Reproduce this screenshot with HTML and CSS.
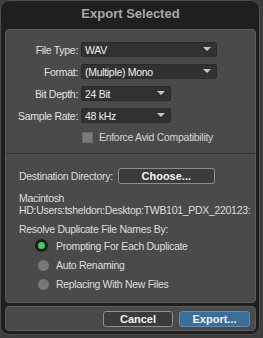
FILE: index.html
```html
<!DOCTYPE html>
<html lang="en">
<head>
  <meta charset="UTF-8">
  <title>Export Selected</title>
  <link rel="stylesheet" href="styles.css">
</head>
<body>

<div class="window">
  <div class="title">Export Selected</div>

  <div class="panel">
    <section class="format-section">
      <div class="field-grid">
        <label>File Type:</label>
        <div class="select wide">WAV</div>
        <label>Format:</label>
        <div class="select wide">(Multiple) Mono</div>
        <label>Bit Depth:</label>
        <div class="select narrow">24 Bit</div>
        <label>Sample Rate:</label>
        <div class="select narrow">48 kHz</div>
      </div>
      <div class="check-row">
        <span class="checkbox"></span>
        <span>Enforce Avid Compatibility</span>
      </div>
    </section>

    <section class="dest-section">
      <div class="dest-row">
        <span>Destination Directory:</span>
        <button class="btn choose">Choose...</button>
      </div>
      <div class="path">Macintosh<br>HD:Users:tsheldon:Desktop:TWB101_PDX_220123:</div>

      <div class="resolve-title">Resolve Duplicate File Names By:</div>
      <div class="radio-list">
        <div class="radio-row"><span class="radio on"></span>Prompting For Each Duplicate</div>
        <div class="radio-row"><span class="radio"></span>Auto Renaming</div>
        <div class="radio-row"><span class="radio"></span>Replacing With New Files</div>
      </div>
    </section>
  </div>

  <div class="footer">
    <button class="btn cancel">Cancel</button>
    <button class="btn export">Export...</button>
  </div>
</div>

</body>
</html>
```

FILE: styles.css
```css
body {
  margin: 0;
  background-color: #3e3e3e;
  font-family: "Liberation Sans", Arial, sans-serif;
  font-size: 10.5px;
  letter-spacing: -0.3px;
  color: #dedede;
}

.window {
  width: 260px;
  height: 335px;
  background-color: #1f1f1f;
  border: 1px solid #4c4c4c;
  border-radius: 9px;
  display: flex;
  flex-direction: column;
  box-sizing: border-box;
  padding: 0 3px 3px 4px;
}

.title {
  height: 28px;
  line-height: 25px;
  text-align: center;
  font-size: 13px;
  letter-spacing: 0;
  font-weight: bold;
  color: #a9a9a9;
}

.panel {
  background-color: #4a4a4a;
  border: 1px solid #5c5c5c;
  border-radius: 4px;
  height: 274px;
  box-sizing: border-box;
}

.format-section {
  padding: 12px 0 0 0;
  height: 124px;
  box-sizing: border-box;
  border-bottom: 1px solid #333;
}

.field-grid {
  display: grid;
  grid-template-columns: 72px auto;
  column-gap: 3px;
  row-gap: 7px;
  align-items: center;
}

.field-grid label {
  text-align: right;
  color: #e2e2e2;
}

.select {
  position: relative;
  height: 15px;
  line-height: 14px;
  background-color: #313131;
  border: 1px solid #2a2a2a;
  border-radius: 2px;
  box-sizing: border-box;
  padding-left: 3px;
  color: #f0f0f0;
}

.select::after {
  content: "";
  position: absolute;
  right: 5px;
  top: 4px;
  border-left: 4px solid transparent;
  border-right: 4px solid transparent;
  border-top: 4px solid #c8c8c8;
}

.wide {
  width: 136px;
}

.narrow {
  width: 90px;
}

.check-row {
  display: flex;
  align-items: center;
  gap: 6px;
  margin: 8px 0 0 76px;
  color: #d4d4d4;
}

.checkbox {
  width: 9px;
  height: 9px;
  background-color: #7a7a7a;
  border: 1px solid #6a6a6a;
}

.dest-section {
  padding: 14px 0 0 13px;
}

.dest-row {
  display: flex;
  align-items: center;
  gap: 5px;
}

.btn {
  font-family: "Liberation Sans", Arial, sans-serif;
  font-size: 11px;
  font-weight: bold;
  color: #f2f2f2;
  background-color: #3b3b3b;
  border: 1px solid #8e8e8e;
  border-radius: 3px;
  height: 16px;
  padding: 0;
}

.choose {
  width: 97px;
}

.path {
  margin-top: 8px;
  line-height: 12px;
}

.resolve-title {
  margin-top: 7px;
}

.radio-list {
  display: flex;
  flex-direction: column;
  gap: 7px;
  margin: 5px 0 0 19px;
}

.radio-row {
  display: flex;
  align-items: center;
  gap: 7px;
  height: 12px;
}

.radio {
  width: 11px;
  height: 11px;
  border-radius: 50%;
  background-color: #787878;
}

.radio.on {
  background-color: #3fd05a;
  border: 3px solid #1c1c1c;
  width: 7px;
  height: 7px;
  margin: -1px 1px 0 -3px;
  padding: 0;
}

.footer {
  margin-top: 3px;
  flex: 1;
  background-color: #4a4a4a;
  border: 1px solid #5c5c5c;
  border-radius: 4px;
  display: flex;
  justify-content: flex-end;
  align-items: center;
  gap: 6px;
  padding-right: 5px;
}

.cancel {
  width: 70px;
}

.export {
  width: 71px;
  background-color: #3a6d9a;
  border-color: #5b8dbb;
}
```
